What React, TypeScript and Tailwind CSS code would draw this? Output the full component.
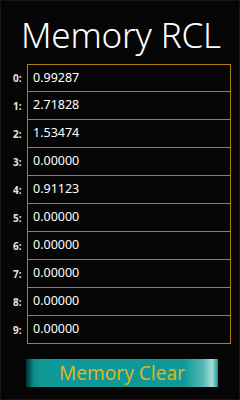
const values = [
  "0.99287",
  "2.71828",
  "1.53474",
  "0.00000",
  "0.91123",
  "0.00000",
  "0.00000",
  "0.00000",
  "0.00000",
  "0.00000",
];

export default function App() {
  return (
    <div
      className="flex h-[400px] w-[240px] flex-col border border-[#161616] bg-[#050505] text-white"
      style={{ fontFamily: '"Noto Sans", "Open Sans", sans-serif' }}
    >
      <h1 className="mt-[11px] pl-[20px] text-[35px] font-light leading-[46px] tracking-[-0.2px]">
        Memory RCL
      </h1>

      <div className="mt-[6px] flex flex-col">
        {values.map((v, i) => (
          <div key={i} className="flex h-[28px] items-center">
            <span className="w-[26px] pl-[12px] text-[10px] font-bold text-[#e6e6e6]">
              {i}:
            </span>
            <div
              className={`flex h-full w-[204px] items-center border-x border-b border-[#b07e10] pl-[5px] text-[12.5px] ${
                i === 0 ? "border-t" : ""
              }`}
            >
              {v}
            </div>
          </div>
        ))}
      </div>

      <div className="mt-[15px] flex justify-center pl-[4px]">
        <button
          type="button"
          className="h-[28px] w-[192px] bg-[linear-gradient(to_right,#03302f_0%,#0b8b8a_4%,#0e9898_8%,#0e9898_82%,#4fb8b5_92%,#a8dcd8_97%,#0e9898_100%)] text-[19px] leading-[28px] text-[#d8b52a]"
        >
          Memory Clear
        </button>
      </div>
    </div>
  );
}
